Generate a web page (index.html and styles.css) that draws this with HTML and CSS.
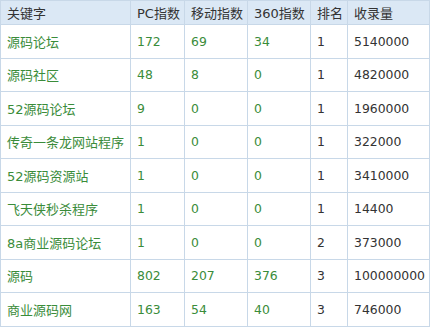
FILE: index.html
```html
<!DOCTYPE html>
<html>
<head>
<meta charset="utf-8">
<link rel="stylesheet" href="styles.css">
</head>
<body>
<table class="kw-table">
  <colgroup>
    <col class="c-kw"><col class="c-pc"><col class="c-mb"><col class="c-360"><col class="c-rank"><col class="c-count">
  </colgroup>
  <thead>
    <tr><th>关键字</th><th>PC指数</th><th>移动指数</th><th>360指数</th><th>排名</th><th>收录量</th></tr>
  </thead>
  <tbody>
    <tr><td class="kw">源码论坛</td><td class="g">172</td><td class="g">69</td><td class="g">34</td><td>1</td><td>5140000</td></tr>
    <tr><td class="kw">源码社区</td><td class="g">48</td><td class="g">8</td><td class="g">0</td><td>1</td><td>4820000</td></tr>
    <tr><td class="kw">52源码论坛</td><td class="g">9</td><td class="g">0</td><td class="g">0</td><td>1</td><td>1960000</td></tr>
    <tr><td class="kw">传奇一条龙网站程序</td><td class="g">1</td><td class="g">0</td><td class="g">0</td><td>1</td><td>322000</td></tr>
    <tr><td class="kw">52源码资源站</td><td class="g">1</td><td class="g">0</td><td class="g">0</td><td>1</td><td>3410000</td></tr>
    <tr><td class="kw">飞天侠秒杀程序</td><td class="g">1</td><td class="g">0</td><td class="g">0</td><td>1</td><td>14400</td></tr>
    <tr><td class="kw">8a商业源码论坛</td><td class="g">1</td><td class="g">0</td><td class="g">0</td><td>2</td><td>373000</td></tr>
    <tr><td class="kw">源码</td><td class="g">802</td><td class="g">207</td><td class="g">376</td><td>3</td><td>100000000</td></tr>
    <tr><td class="kw">商业源码网</td><td class="g">163</td><td class="g">54</td><td class="g">40</td><td>3</td><td>746000</td></tr>
  </tbody>
</table>
</body>
</html>
```
FILE: styles.css
```css
html, body {
  margin: 0;
  padding: 0;
  background: #ffffff;
}
.kw-table {
  border-collapse: collapse;
  table-layout: fixed;
  width: 429px;
  font-family: "DejaVu Sans", "Noto Sans CJK SC", sans-serif;
  font-size: 12.4px;
  color: #333333;
}
.c-kw { width: 130px; }
.c-pc { width: 54px; }
.c-mb { width: 63px; }
.c-360 { width: 63px; }
.c-rank { width: 37px; }
.c-count { width: 82px; }
.kw-table th,
.kw-table td {
  border: 1px solid #c8d8e8;
  text-align: left;
  padding: 0 0 0 6px;
  white-space: nowrap;
  overflow: hidden;
}
.kw-table th {
  background: #dbe8f5;
  font-weight: normal;
  font-size: 13px;
  height: 23px;
  color: #333333;
}
.kw-table td {
  height: 32.5px;
}
.kw-table td.g {
  color: #3a8c3a;
}
.kw-table td.kw {
  color: #3a8c3a;
  font-size: 13px;
}
```
